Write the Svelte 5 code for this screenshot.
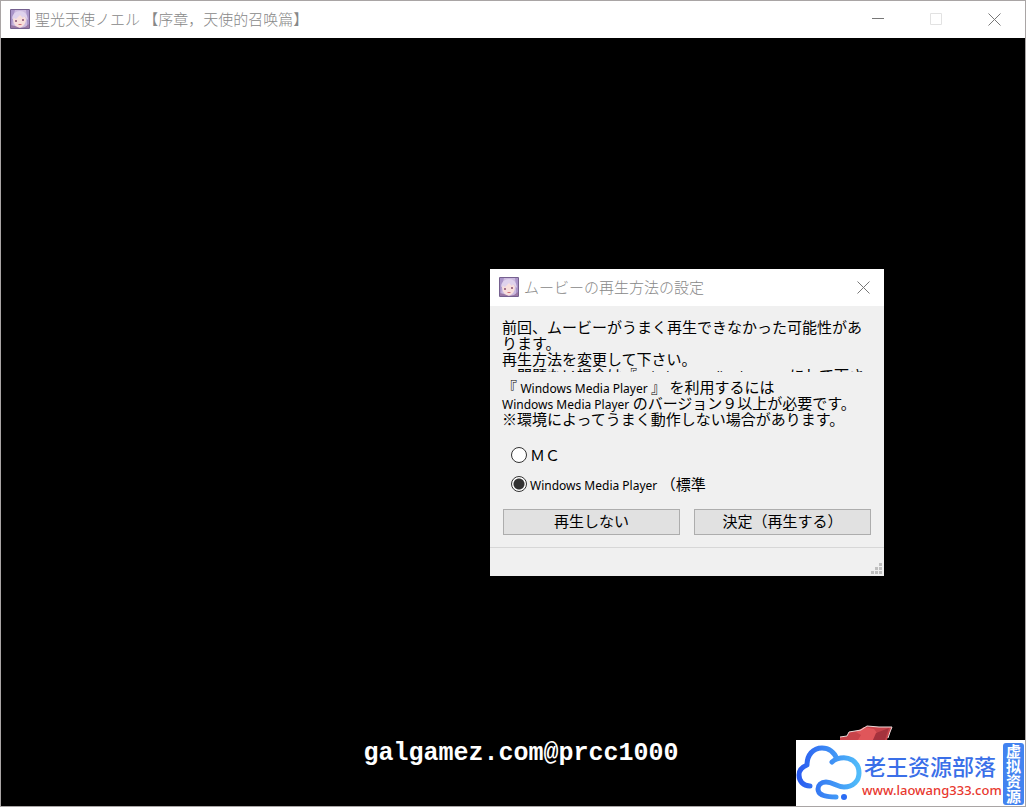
<script lang="ts">
  let method = $state('wmp');
</script>

{#snippet face()}
  <svg class="face" viewBox="0 0 20 20" aria-hidden="true">
    <rect width="20" height="20" rx="1" fill="#75608f" />
    <rect x="1" y="1" width="18" height="18" fill="#cbb9de" />
    <path d="M1 1h4L3 8l-1 11H1zM16 1h3v18h-2l0-11z" fill="#a994c8" />
    <path d="M3 10Q4 5 9 5t7 5q0 7-7 9-5-1-6-9z" fill="#f8dfdc" />
    <path d="M2 10Q3 2 10 2t8 9l-4-4-1 2-3-3-4 4-2-1z" fill="#dfd2ec" />
    <path d="M5 11h2v2H5zM12 10h2v2h-2z" fill="#a5748c" />
    <path d="M8 15h4l-1 1H9z" fill="#cf7078" />
    <path d="M1 16l4 1 5 2 5-1 4-3v4H1z" fill="#9a78a4" />
  </svg>
{/snippet}

{#snippet cross()}
  <svg width="13" height="13" viewBox="0 0 13 13" aria-hidden="true">
    <path d="M.5.5l12 12M12.5.5l-12 12" stroke="#777" fill="none" />
  </svg>
{/snippet}

<main class="window" lang="ja">
  <header class="titlebar">
    {@render face()}
    <h1>聖光天使ノエル <span lang="zh-CN">【序章，天使的召唤篇】</span></h1>
    <div class="controls">
      <button aria-label="Minimize">
        <svg width="12" height="12" viewBox="0 0 12 12"><path d="M0 5.5h12" stroke="#777" /></svg>
      </button>
      <button aria-label="Maximize" disabled>
        <svg width="12" height="12" viewBox="0 0 12 12"><path d="M.5.5h11v11H.5z" stroke="#e2e2e2" fill="none" /></svg>
      </button>
      <button aria-label="Close">{@render cross()}</button>
    </div>
  </header>

  <section class="stage">
    <p class="caption">galgamez.com@prcc1000</p>
  </section>

  <div class="dialog" role="dialog" aria-labelledby="dialog-title">
    <header class="titlebar small">
      {@render face()}
      <h2 id="dialog-title">ムービーの再生方法の設定</h2>
      <div class="controls">
        <button aria-label="Close">{@render cross()}</button>
      </div>
    </header>

    <form onsubmit={(e) => e.preventDefault()}>
      <p class="message clipped">
        前回、ムービーがうまく再生できなかった可能性があ<br />
        ります。<br />
        再生方法を変更して下さい。<br />
        　問題ない場合は『 <span class="latin">Windows Media Player</span> 』 にして下さ
      </p>
      <p class="message">
        『 <span class="latin">Windows Media Player</span> 』 を利用するには<br />
        <span class="latin">Windows Media Player</span> のバージョン９以上が必要です。<br />
        ※環境によってうまく動作しない場合があります。
      </p>

      <div class="options">
        <label>
          <input type="radio" name="method" value="mc" bind:group={method} />
          <span>ＭＣ</span>
        </label>
        <label>
          <input type="radio" name="method" value="wmp" bind:group={method} />
          <span><span class="latin">Windows Media Player</span> （標準</span>
        </label>
      </div>

      <div class="actions">
        <button type="button">再生しない</button>
        <button type="submit">決定（再生する）</button>
      </div>
    </form>

    <footer class="status">
      <svg width="11" height="11" viewBox="0 0 11 11" aria-hidden="true">
        <path d="M8 0h3v3H8zM4 4h3v3H4zM8 4h3v3H8zM0 8h3v3H0zM4 8h3v3H4zM8 8h3v3H8z" fill="#bfbfbf" />
      </svg>
    </footer>
  </div>

  <aside class="watermark" lang="zh-CN">
    <svg class="hat" width="54" height="16" viewBox="0 0 54 16" aria-hidden="true">
      <path d="M1 16v-3l7-1 2-4 12-2 6-4 12 1 13 0-2 5-3 8z" fill="#c8434a" />
      <path d="M17 8l8-5 10 2 3 4-4 7H19l3-5z" fill="#e0565a" />
      <path d="M37 9l13-5-4 12H34z" fill="#a5323d" />
      <path d="M1 13l7-1 2-4 12-2 6-4 12 1 13 0-2 5-2 6" stroke="#f0dada" fill="none" />
    </svg>
    <svg class="cloud" width="66" height="66" viewBox="0 0 66 66" aria-hidden="true">
      <defs>
        <linearGradient id="sky" x1="0" x2="1">
          <stop offset="0" stop-color="#2a5cf0" />
          <stop offset="1" stop-color="#50bcfa" />
        </linearGradient>
      </defs>
      <path
        d="M14 45C7 45 3 40 3 34c0-4 3-8 8-10C11 14 17 7 26 7c7 0 12 4 15 11 11-4 22 2 22 14 0 8-6 14-15 14-7 0-11-5-18-5-5 0-8 3-8 7 0 5 5 8 18 8M41 18q-3 1-5 3"
        fill="none" stroke="url(#sky)" stroke-width="5" stroke-linecap="round" stroke-linejoin="round"
      />
      <circle cx="48" cy="56" r="3" fill="#2a6cf4" />
    </svg>
    <div class="brand">
      <strong>老王资源部落</strong>
      <a href="http://www.laowang333.com">www.laowang333.com</a>
    </div>
    <span class="badge">虚拟资源</span>
  </aside>
</main>

<style>
  :global(body) {
    margin: 0;
    background: #000;
  }

  .window {
    position: relative;
    display: flex;
    flex-direction: column;
    box-sizing: border-box;
    min-height: 100vh;
    border: 1px solid #a9a5a5;
    background: #000;
    font-family: "Noto Sans CJK JP", sans-serif;
    font-size: 15px;
    text-spacing-trim: space-all;
    overflow: hidden;
  }

  [lang='zh-CN'] {
    font-family: "Noto Sans CJK SC", sans-serif;
  }

  .titlebar {
    display: flex;
    align-items: center;
    box-sizing: border-box;
    height: 37px;
    padding: 0 2px 1px 9px;
    background: #fff;
    color: #888;
  }

  .face {
    flex: none;
    width: 20px;
    height: 20px;
    margin-right: 5px;
  }

  h1,
  h2 {
    flex: 1;
    margin: 0;
    font-size: 15px;
    font-weight: 300;
    line-height: 20px;
    white-space: nowrap;
  }

  .controls {
    display: flex;
    align-self: stretch;
  }

  .controls button {
    display: flex;
    align-items: center;
    justify-content: center;
    width: 58px;
    padding: 0;
    border: none;
    background: none;
  }

  .small .controls button {
    width: 38px;
  }

  .stage {
    flex: 1;
    display: flex;
    align-items: flex-end;
    justify-content: center;
  }

  .caption {
    margin: 0 0 37px 16px;
    color: #fff;
    font: bold 25px/30px "Liberation Mono", monospace;
  }

  .dialog {
    position: absolute;
    left: 489px;
    top: 268px;
    width: 394px;
    background: #f0f0f0;
    color: #000;
  }

  form {
    padding: 13px 13px 12px 12px;
  }

  .message {
    margin: 0;
    line-height: 16px;
    white-space: nowrap;
  }

  .clipped {
    height: 53px;
    margin-bottom: 7px;
    overflow: hidden;
  }

  .latin {
    font-family: "Noto Sans", sans-serif;
    font-size: 12px;
    line-height: 1;
  }

  .options {
    padding: 13px 9px 11px;
  }

  label {
    display: flex;
    align-items: center;
    gap: 3px;
    height: 29px;
    line-height: 16px;
  }

  input {
    appearance: none;
    width: 16px;
    height: 16px;
    margin: 0;
    border: 1px solid #333;
    border-radius: 50%;
    background: #fff;
  }

  input:checked {
    background: radial-gradient(circle, #333 5px, #fff 6px);
  }

  .actions {
    display: flex;
    gap: 14px;
    padding-left: 1px;
  }

  .actions button {
    flex: 1;
    height: 26px;
    padding: 0 0 2px;
    border: 1px solid #adadad;
    background: #e1e1e1;
    color: #000;
    font: 15px/22px "Noto Sans CJK JP", sans-serif;
  }

  .status {
    display: flex;
    align-items: flex-end;
    justify-content: flex-end;
    height: 29px;
    padding: 0 2px 2px 0;
    border-top: 1px solid #d7d7d7;
    box-sizing: border-box;
  }

  .watermark {
    position: absolute;
    right: -1px;
    bottom: -1px;
    display: flex;
    align-items: center;
    box-sizing: border-box;
    width: 230px;
    height: 67px;
    padding-right: 2px;
    background: #fff;
  }

  .hat {
    position: absolute;
    left: 43px;
    bottom: 100%;
  }

  .cloud {
    flex: none;
  }

  .brand {
    flex: 1;
    display: flex;
    flex-direction: column;
    min-width: 0;
    padding-top: 4px;
    white-space: nowrap;
  }

  .brand strong {
    padding-left: 2px;
    color: #3a6fe8;
    font-size: 22px;
    font-weight: 500;
    line-height: 28px;
  }

  .brand a {
    color: #e8382f;
    font: 500 13px/22px "Noto Sans", sans-serif;
    text-decoration: none;
  }

  .badge {
    flex: none;
    width: 21px;
    padding: 1px 0;
    border-radius: 3px;
    background: #4283f0;
    color: #fff;
    font-size: 15px;
    font-weight: 700;
    line-height: 21px;
    writing-mode: vertical-rl;
  }
</style>
